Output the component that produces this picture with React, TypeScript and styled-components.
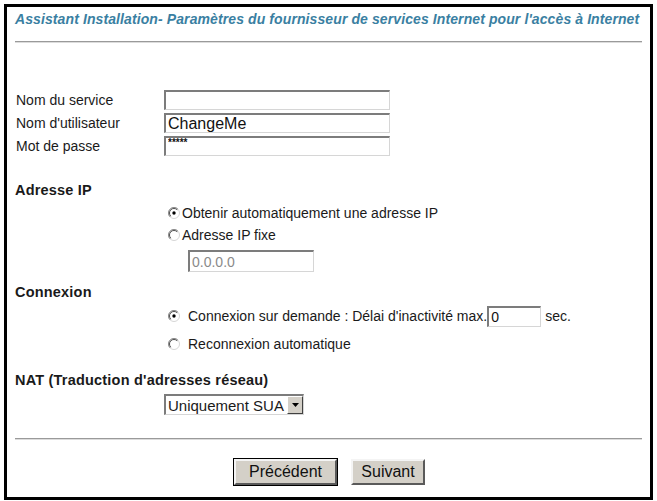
import React from 'react';
import styled, {createGlobalStyle} from 'styled-components';

const GlobalStyle = createGlobalStyle`
  body {
    margin: 0;
    background: #fff;
    font-family: "Liberation Sans", Arial, sans-serif;
    color: #1a1a1a;
  }
`

const Frame = styled.div`
  box-sizing: border-box;
  margin: 4px 0 0 4px;
  width: 649px;
  height: 496px;
  border: 3px solid #000;
  padding: 0 8px;
  display: flex;
  flex-direction: column;
`

const Title = styled.h1`
  margin: 4px 0 0 0;
  font-size: 14px;
  line-height: 16px;
  font-weight: bold;
  font-style: italic;
  letter-spacing: 0.1px;
  color: #3a7fa2;
  white-space: nowrap;
`

const Rule = styled.hr<{ $top: number }>`
  margin: ${props => props.$top}px 0 0 0;
  height: 0;
  border: none;
  border-top: 1px solid #9a9a9a;
  border-bottom: 1px solid #dcdcdc;
`

const FieldGrid = styled.div`
  margin-top: 47px;
  display: grid;
  grid-template-columns: 149px 226px;
  grid-auto-rows: 20px;
  row-gap: 3px;
  align-items: center;
`

const Label = styled.label`
  font-size: 14px;
  padding-left: 1px;
`

const TextBox = styled.input<{ $w?: number; $size?: number; $grey?: boolean }>`
  box-sizing: border-box;
  width: ${props => props.$w ? props.$w + 'px' : '100%'};
  height: 100%;
  margin: 0;
  padding: 0 2px;
  font-family: "Liberation Sans", Arial, sans-serif;
  font-size: ${props => props.$size || 16}px;
  color: ${props => props.$grey ? '#8a8a8a' : '#111'};
  background: #fff;
  border-top: 2px solid #7c7c7c;
  border-left: 2px solid #7c7c7c;
  border-right: 1px solid #d6d6d6;
  border-bottom: 1px solid #d6d6d6;
  outline: none;
`

const PassBox = styled(TextBox)`
  font-size: 10px;
  padding: 0 2px 9px 2px;
  font-weight: bold;
`

const Heading = styled.h2<{ $top: number }>`
  margin: ${props => props.$top}px 0 0 0;
  font-size: 14.5px;
  line-height: 16px;
  letter-spacing: 0.2px;
  font-weight: bold;
  color: #1a1a1a;
  white-space: nowrap;
`

const RadioRow = styled.div<{ $top: number; $h?: number; $gap?: number }>`
  margin: ${props => props.$top}px 0 0 153px;
  height: ${props => props.$h || 22}px;
  display: flex;
  align-items: center;
  gap: ${props => props.$gap || 2}px;
  font-size: 14px;
  white-space: nowrap;
`

const Indented = styled.div<{ $top: number; $left: number; $w: number; $h: number }>`
  margin: ${props => props.$top}px 0 0 ${props => props.$left}px;
  width: ${props => props.$w}px;
  height: ${props => props.$h}px;
  display: flex;
`

const Delay = styled.span`
  display: flex;
  align-items: center;
  height: 100%;
`

const Unit = styled.span`
  margin-left: 4px;
`

const SelectBox = styled.div`
  box-sizing: border-box;
  width: 100%;
  height: 100%;
  display: flex;
  align-items: center;
  background: #fff;
  border-top: 2px solid #7c7c7c;
  border-left: 2px solid #7c7c7c;
  border-right: 1px solid #d6d6d6;
  border-bottom: 1px solid #d6d6d6;
  font-size: 15px;
`

const SelectText = styled.span`
  flex: 1;
  padding-left: 2px;
`

const DropButton = styled.span`
  box-sizing: border-box;
  width: 16px;
  height: 100%;
  background: #d4d0c8;
  border-top: 1px solid #fff;
  border-left: 1px solid #fff;
  border-right: 1px solid #404040;
  border-bottom: 1px solid #404040;
  display: flex;
  align-items: center;
  justify-content: center;
`

const ButtonBar = styled.div`
  margin-top: 19px;
  display: flex;
  justify-content: center;
  gap: 14px;
  padding-left: 2px;
`

const Button = styled.button<{ $w: number; $default?: boolean }>`
  box-sizing: border-box;
  width: ${props => props.$w}px;
  height: 26px;
  margin: 0;
  padding: 0;
  font-family: "Liberation Sans", Arial, sans-serif;
  font-size: 16px;
  color: #111;
  background: #d4d0c8;
  border-top: 2px solid #f4f4f4;
  border-left: 2px solid #f4f4f4;
  border-right: 2px solid #5a5a5a;
  border-bottom: 2px solid #5a5a5a;
  outline: ${props => props.$default ? '1px solid #000' : 'none'};
  outline-offset: 0;
`

const Radio = ({checked}: { checked?: boolean }) => (
    <svg width="12" height="12" viewBox="0 0 12 12">
        <circle cx="6" cy="6" r="5.5" fill="#fff" stroke="#d6d6d6"/>
        <path d="M2.1 9.9 A5.5 5.5 0 0 1 9.9 2.1" fill="none" stroke="#8a8a8a"/>
        <path d="M2.8 9.2 A4.5 4.5 0 0 1 9.2 2.8" fill="none" stroke="#505050"/>
        {checked && <circle cx="6" cy="6" r="1.7" fill="#000"/>}
    </svg>
)

const Arrow = () => (
    <svg width="7" height="4" viewBox="0 0 7 4">
        <path d="M0 0 H7 L3.5 4 Z" fill="#000"/>
    </svg>
)

export default function App() {
    return (
        <>
            <GlobalStyle/>
            <Frame>
                <Title>Assistant Installation- Paramètres du fournisseur de services Internet pour l'accès à Internet</Title>
                <Rule $top={14}/>

                <FieldGrid>
                    <Label>Nom du service</Label>
                    <TextBox readOnly value=""/>
                    <Label>Nom d'utilisateur</Label>
                    <TextBox readOnly value="ChangeMe"/>
                    <Label>Mot de passe</Label>
                    <PassBox readOnly value="*****"/>
                </FieldGrid>

                <Heading $top={26}>Adresse IP</Heading>
                <RadioRow $top={4}>
                    <Radio checked/>
                    <span>Obtenir automatiquement une adresse IP</span>
                </RadioRow>
                <RadioRow $top={0}>
                    <Radio/>
                    <span>Adresse IP fixe</span>
                </RadioRow>
                <Indented $top={4} $left={173} $w={126} $h={22}>
                    <TextBox readOnly value="0.0.0.0" $grey $size={14}/>
                </Indented>

                <Heading $top={12}>Connexion</Heading>
                <RadioRow $top={4} $h={24} $gap={8}>
                    <Radio checked/>
                    <Delay>
                        Connexion sur demande : Délai d'inactivité max.
                        <TextBox readOnly value="0" $w={54} $size={14} style={{height: 21}}/>
                        <Unit>sec.</Unit>
                    </Delay>
                </RadioRow>
                <RadioRow $top={5} $gap={8}>
                    <Radio/>
                    <span>Reconnexion automatique</span>
                </RadioRow>

                <Heading $top={17}>NAT (Traduction d'adresses réseau)</Heading>
                <Indented $top={6} $left={149} $w={140} $h={21}>
                    <SelectBox>
                        <SelectText>Uniquement SUA</SelectText>
                        <DropButton><Arrow/></DropButton>
                    </SelectBox>
                </Indented>

                <Rule $top={23}/>

                <ButtonBar>
                    <Button $w={103} $default>Précédent</Button>
                    <Button $w={74}>Suivant</Button>
                </ButtonBar>
            </Frame>
        </>
    );
}
